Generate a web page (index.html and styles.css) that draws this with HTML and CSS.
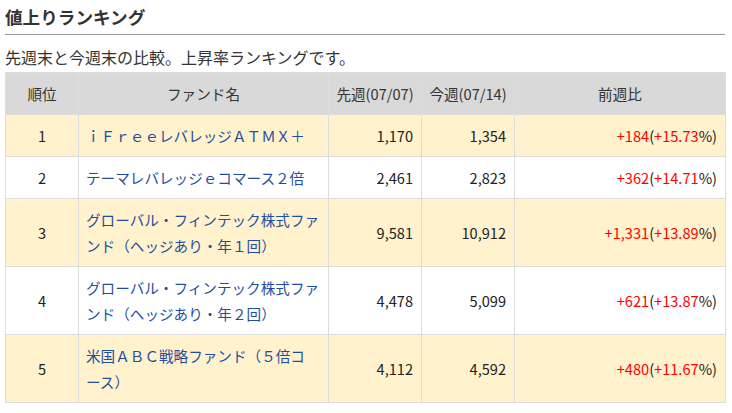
FILE: index.html
```html
<!DOCTYPE html>
<html lang="ja">
<head>
<meta charset="utf-8">
<title>値上りランキング</title>
<link rel="stylesheet" href="styles.css">
</head>
<body>
<div class="page">
  <h2 class="title">値上りランキング</h2>
  <p class="lead">先週末と今週末の比較。上昇率ランキングです。</p>
  <table class="ranking">
    <colgroup>
      <col class="c-rank"><col class="c-name"><col class="c-num"><col class="c-num"><col class="c-diff">
    </colgroup>
    <thead>
      <tr><th>順位</th><th>ファンド名</th><th>先週(07/07)</th><th>今週(07/14)</th><th>前週比</th></tr>
    </thead>
    <tbody>
      <tr class="odd">
        <td class="rank">1</td>
        <td class="name"><a href="#">ｉＦｒｅｅレバレッジＡＴＭＸ＋</a></td>
        <td class="num">1,170</td><td class="num">1,354</td>
        <td class="num"><span class="up">+184</span>(<span class="up">+15.73</span>%)</td>
      </tr>
      <tr>
        <td class="rank">2</td>
        <td class="name"><a href="#">テーマレバレッジｅコマース２倍</a></td>
        <td class="num">2,461</td><td class="num">2,823</td>
        <td class="num"><span class="up">+362</span>(<span class="up">+14.71</span>%)</td>
      </tr>
      <tr class="odd">
        <td class="rank">3</td>
        <td class="name"><a href="#">グローバル・フィンテック株式ファンド（ヘッジあり・年１回）</a></td>
        <td class="num">9,581</td><td class="num">10,912</td>
        <td class="num"><span class="up">+1,331</span>(<span class="up">+13.89</span>%)</td>
      </tr>
      <tr>
        <td class="rank">4</td>
        <td class="name"><a href="#">グローバル・フィンテック株式ファンド（ヘッジあり・年２回）</a></td>
        <td class="num">4,478</td><td class="num">5,099</td>
        <td class="num"><span class="up">+621</span>(<span class="up">+13.87</span>%)</td>
      </tr>
      <tr class="odd">
        <td class="rank">5</td>
        <td class="name"><a href="#">米国ＡＢＣ戦略ファンド（５倍コ<br>ース）</a></td>
        <td class="num">4,112</td><td class="num">4,592</td>
        <td class="num"><span class="up">+480</span>(<span class="up">+11.67</span>%)</td>
      </tr>
    </tbody>
  </table>
</div>
</body>
</html>
```
FILE: styles.css
```css
html, body {
  margin: 0;
  padding: 0;
  background: #fff;
}
body {
  font-family: "Noto Sans CJK JP", "Noto Sans", sans-serif;
  color: #333;
}
.page {
  width: 720px;
  margin: 0 5px;
}
.title {
  margin: 0;
  padding: 4px 0 4px;
  font-size: 17.6px;
  line-height: 26px;
  font-weight: bold;
  color: #333;
  border-bottom: 1px solid #999;
}
.lead {
  margin: 10px 0 3px;
  font-size: 16px;
  line-height: 24px;
  color: #333;
}
.ranking {
  width: 720px;
  border-collapse: collapse;
  table-layout: fixed;
  font-size: 14.6px;
  line-height: 26px;
}
.c-rank { width: 73px; }
.c-name { width: 250px; }
.c-num { width: 93px; }
.c-diff { width: 211px; }
.ranking th,
.ranking td {
  border: 1px solid #ddd;
  padding: 7.5px 7px;
  vertical-align: middle;
}
.ranking th {
  background: #d9d9d9;
  font-weight: normal;
  text-align: center;
  white-space: nowrap;
  color: #333;
}
.ranking tr.odd td {
  background: #fff2cc;
}
.ranking td {
  color: #222;
}
.ranking td.num {
  padding-right: 8px;
}
.rank { text-align: center; }
.name a {
  color: #1d4f9e;
  text-decoration: none;
}
.num { text-align: right; }
.up { color: #f00; }
```
